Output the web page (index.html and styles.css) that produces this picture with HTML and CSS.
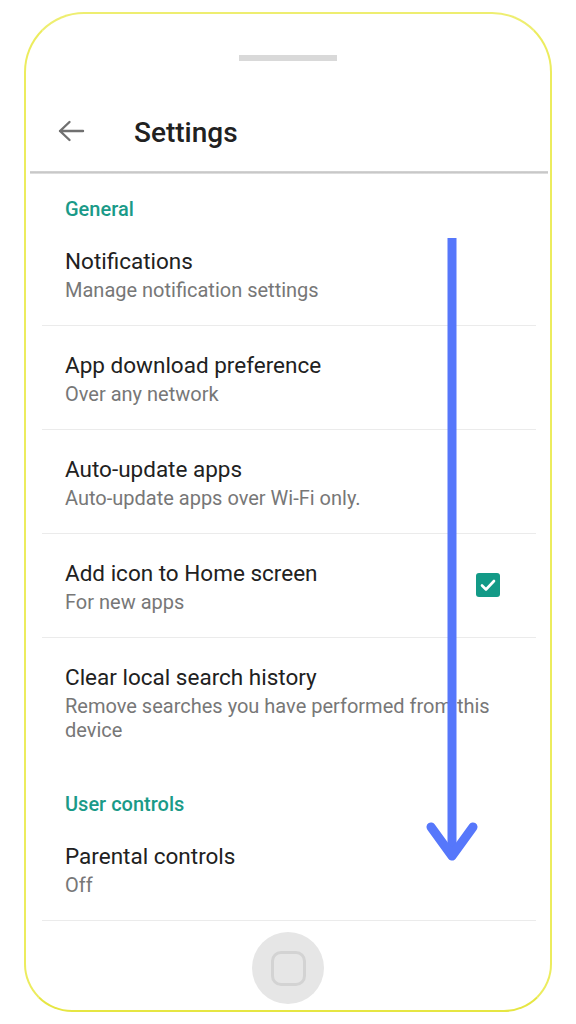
FILE: index.html
```html
<!DOCTYPE html>
<html>
<head>
<meta charset="utf-8">
<link rel="stylesheet" href="styles.css">
</head>
<body>
<div class="phone">
  <div class="speaker"></div>
  <div class="appbar">
    <svg class="back" width="30" height="24" viewBox="0 0 30 24">
      <path d="M27 12H4M13.5 3L4 12l9.5 9" fill="none" stroke="#707070" stroke-width="2.4" stroke-linecap="round" stroke-linejoin="round"/>
    </svg>
    <h1 class="title">Settings</h1>
  </div>
  <div class="appbar-divider"></div>
  <div class="screen">
    <div class="section">General</div>
    <div class="row">
      <div class="texts">
        <div class="row-title">Notifications</div>
        <div class="row-sub">Manage notification settings</div>
      </div>
    </div>
    <div class="row">
      <div class="texts">
        <div class="row-title">App download preference</div>
        <div class="row-sub">Over any network</div>
      </div>
    </div>
    <div class="row">
      <div class="texts">
        <div class="row-title">Auto-update apps</div>
        <div class="row-sub">Auto-update apps over Wi-Fi only.</div>
      </div>
    </div>
    <div class="row">
      <div class="texts">
        <div class="row-title">Add icon to Home screen</div>
        <div class="row-sub">For new apps</div>
      </div>
      <div class="checkbox">
        <svg width="24" height="24" viewBox="0 0 24 24">
          <path d="M6 12.5l4 4 8-8.5" fill="none" stroke="#fff" stroke-width="2.6" stroke-linecap="round" stroke-linejoin="round"/>
        </svg>
      </div>
    </div>
    <div class="row row-last">
      <div class="texts">
        <div class="row-title">Clear local search history</div>
        <div class="row-sub">Remove searches you have performed from this device</div>
      </div>
    </div>
    <div class="section">User controls</div>
    <div class="row">
      <div class="texts">
        <div class="row-title">Parental controls</div>
        <div class="row-sub">Off</div>
      </div>
    </div>
  </div>
  <div class="home"><div class="home-inner"></div></div>
  <svg class="scroll-arrow" width="60" height="640" viewBox="0 0 60 640">
    <path d="M26 0V616" fill="none" stroke="#5677fb" stroke-width="9"/>
    <path d="M5 589L26 618L47 589" fill="none" stroke="#5677fb" stroke-width="9" stroke-linecap="round" stroke-linejoin="round"/>
  </svg>
</div>
</body>
</html>
```

FILE: styles.css
```css
* { box-sizing: border-box; }
html, body { margin: 0; padding: 0; background: #ffffff; }
body {
  font-family: Roboto, "Noto Sans", "Liberation Sans", sans-serif;
  width: 576px;
  height: 1024px;
  overflow: hidden;
  padding: 12px 0 0 24px;
}
.phone {
  position: relative;
  width: 528px;
  height: 1000px;
  border: 2px solid #eeee70;
  border-bottom-color: #e6e643;
  border-left-color: #ecec5e;
  border-right-color: #ecec5e;
  border-radius: 60px 60px 48px 48px;
  display: flex;
  flex-direction: column;
  overflow: hidden;
  background: #fff;
}
.speaker {
  align-self: center;
  margin-top: 41px;
  width: 98px;
  height: 6px;
  background: #d9d9d9;
  flex: none;
}
.appbar {
  flex: none;
  height: 48px;
  margin-top: 45px;
  display: flex;
  align-items: center;
  padding-left: 30px;
}
.back { flex: none; margin-top: 2px; }
.title {
  margin: 4px 0 0 48px;
  font-size: 28px;
  font-weight: 500;
  color: #212121;
}
.appbar-divider {
  flex: none;
  margin: 17px 2px 0 4px;
  height: 3px;
  background: linear-gradient(#d6d6d6, #c8c8c8 50%, #e8e8e8);
}
.screen {
  flex: none;
  padding-left: 16px;
  padding-right: 14px;
}
.section {
  padding: 23px 0 1px 23px;
  line-height: 24px;
  font-size: 20px;
  font-weight: 500;
  color: #1a9a88;
}
.row {
  display: flex;
  align-items: center;
  padding: 25px 0 23px 23px;
  border-bottom: 1px solid #ebebeb;
}
.row-last { border-bottom: none; padding-bottom: 27px; }
.texts { flex: 1; max-width: 440px; }
.row-title {
  font-size: 22.5px;
  line-height: 28px;
  color: #212121;
}
.row-sub {
  margin-top: 3px;
  font-size: 20px;
  line-height: 24px;
  color: #777777;
}
.checkbox {
  flex: none;
  width: 24px;
  height: 24px;
  border-radius: 3px;
  background: #139a87;
  margin-left: auto;
  margin-right: 36px;
  margin-bottom: 4px;
}
.checkbox svg { display: block; }
.home {
  flex: none;
  margin-top: auto;
  margin-bottom: 6px;
  align-self: center;
  width: 72px;
  height: 72px;
  border-radius: 50%;
  background: #e6e6e6;
  display: flex;
  align-items: center;
  justify-content: center;
}
.home-inner {
  width: 35px;
  height: 35px;
  border: 3px solid #d3d3d3;
  border-radius: 10px;
}
.scroll-arrow {
  position: absolute;
  left: 400px;
  top: 224px;
}
```
